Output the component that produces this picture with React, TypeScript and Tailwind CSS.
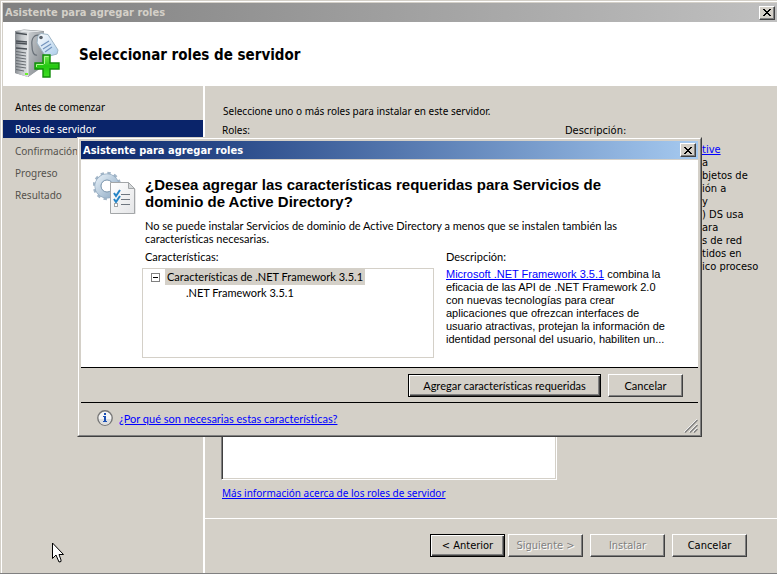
import { type ReactNode } from "react";

const UI = "font-['Noto_Sans',Tahoma,sans-serif]";
const UI_WIDE = "font-['DejaVu_Sans_Condensed','DejaVu_Sans',sans-serif] text-[11px]";
const UI_BOLD = "font-['DejaVu_Sans_Condensed','DejaVu_Sans',sans-serif] font-bold";

const steps = [
  { label: "Antes de comenzar", state: "done" },
  { label: "Roles de servidor", state: "current" },
  { label: "Confirmación", state: "pending" },
  { label: "Progreso", state: "pending" },
  { label: "Resultado", state: "pending" },
];

const stepStyles: Record<string, string> = {
  done: "text-black",
  current: "bg-[#0a246a] text-white",
  pending: "text-[#55524d]",
};

const roleLines = ["a", "bjetos de", "ión a", "y", ") DS usa", "ara", "s de red", "tidos en", "ico proceso"];

const descriptionLines = [
  "eficacia de las API de .NET Framework 2.0",
  "con nuevas tecnologías para crear",
  "aplicaciones que ofrezcan interfaces de",
  "usuario atractivas, protejan la información de",
  "identidad personal del usuario, habiliten un...",
];

function CloseButton() {
  return (
    <button
      type="button"
      aria-label="Cerrar"
      className="flex h-[14px] w-4 shrink-0 items-center justify-center border border-t-white border-r-[#404040] border-b-[#404040] border-l-white bg-[#d4d0c8] shadow-[inset_-1px_-1px_0_#808080]"
    >
      <svg width="8" height="7" viewBox="0 0 8 7" shapeRendering="crispEdges">
        <path
          d="M0 0h2v1h1v1h2v-1h1v-1h2v1h-1v1h-1v1h-1v1h1v1h1v1h1v1h-2v-1h-1v-1h-2v1h-1v1h-2v-1h1v-1h1v-1h1v-1h-1v-1h-1v-1h-1z"
          fill="#000"
        />
      </svg>
    </button>
  );
}

function PushButton({
  children,
  primary = false,
  disabled = false,
  className = "w-[75px]",
}: {
  children: ReactNode;
  primary?: boolean;
  disabled?: boolean;
  className?: string;
}) {
  const frame = primary
    ? "border-black shadow-[inset_1px_1px_0_#fff,inset_-1px_-1px_0_#404040,inset_-2px_-2px_0_#808080]"
    : "border-t-white border-l-white border-r-[#404040] border-b-[#404040] shadow-[inset_-1px_-1px_0_#808080]";
  const ink = disabled ? "text-[#808080] [text-shadow:1px_1px_0_#fff]" : "text-black";
  return (
    <button
      type="button"
      disabled={disabled}
      className={`flex h-[23px] shrink-0 items-center justify-center border bg-[#d4d0c8] whitespace-nowrap ${frame} ${ink} ${className}`}
    >
      {children}
    </button>
  );
}

function ServerIcon() {
  return (
    <svg width="46" height="50" viewBox="0 0 46 50" className="shrink-0" aria-hidden="true">
      <defs>
        <linearGradient id="front" x1="0" x2="1">
          <stop offset="0" stopColor="#868b90" />
          <stop offset="0.5" stopColor="#c3c7ca" />
          <stop offset="1" stopColor="#dfe2e4" />
        </linearGradient>
        <linearGradient id="side" x1="0" x2="1" y2="1">
          <stop offset="0" stopColor="#c9cdd0" />
          <stop offset="1" stopColor="#7c8287" />
        </linearGradient>
        <linearGradient id="plus" x1="0" y1="0" x2="0" y2="1">
          <stop offset="0" stopColor="#7be854" />
          <stop offset="0.5" stopColor="#24c911" />
          <stop offset="1" stopColor="#3fdf22" />
        </linearGradient>
        <linearGradient id="tag" x1="0" x2="1" y2="1">
          <stop offset="0" stopColor="#ffffff" />
          <stop offset="1" stopColor="#a9cbea" />
        </linearGradient>
      </defs>
      <path d="M0 2L9 0.500L29 2V36L13 48L0 44z" fill="#8b9094" />
      <path d="M1 2L9 1L28 2.500L13 4z" fill="#e3e6e8" />
      <path d="M13 4L29 2.500V37L13 48z" fill="url(#side)" />
      <path d="M0 2L13 4V48L0 44z" fill="url(#front)" />
      <path d="M1 4L12 5.500M1 12L12 13M1 14L12 15M1 19L12 20" stroke="#4a5056" strokeWidth="1.500" />
      <g stroke="#666b70" strokeWidth="1">
        <path d="M1 22.500L11 24M1 25.500L11 27M1 28.500L11 30M1 31.500L11 33M1 34.500L11 36M1 37.500L11 39M1 40.500L9 42" />
      </g>
      <path d="M13 4V47" stroke="#eef0f1" />
      <rect x="10" y="44" width="3" height="2" fill="#6bf12b" />
      <path d="M26 7C19 4 16 10 17 17C17 23 19 27 22 26" fill="none" stroke="#687078" strokeWidth="1.200" />
      <path d="M23 7L26 4.500L33 5.500L43 21L42 25L31 28L22 14z" fill="url(#tag)" stroke="#9fb6c6" />
      <circle cx="26" cy="8.500" r="1.800" fill="#59616a" />
      <path d="M26 17L34 12M28 20L36 15M30 23L37 18" stroke="#7494bd" strokeWidth="1.200" />
      <path d="M28 26h7v8h9v6h-9v8h-7v-8h-8v-6h8z" fill="url(#plus)" stroke="#128d0b" strokeWidth="1.400" />
      <path d="M29.500 35V27.500h4M21.500 38V35.500h7" fill="none" stroke="#b2f695" />
    </svg>
  );
}

function GearListIcon() {
  return (
    <svg width="44" height="44" viewBox="0 0 44 44" className="shrink-0" aria-hidden="true">
      <defs>
        <linearGradient id="gear" x1="0" x2="1" y2="1">
          <stop offset="0" stopColor="#dfeaf3" />
          <stop offset="1" stopColor="#94afc8" />
        </linearGradient>
        <linearGradient id="sheet" x1="0" x2="1" y2="1">
          <stop offset="0" stopColor="#ffffff" />
          <stop offset="1" stopColor="#e4e5e7" />
        </linearGradient>
      </defs>
      <circle cx="14" cy="15" r="12.500" fill="none" stroke="#a3b6c8" strokeWidth="3.500" strokeDasharray="3.270 3.270" />
      <circle cx="14" cy="15" r="9" fill="none" stroke="#93abc1" strokeWidth="7" />
      <circle cx="14" cy="15" r="9" fill="none" stroke="url(#gear)" strokeWidth="5.500" />
      <circle cx="14" cy="15" r="6" fill="#fff" stroke="#7e98af" />
      <path d="M18.500 12.500h18l6 6V43h-24z" fill="#9b9ea1" opacity="0.500" />
      <path d="M17.500 11.500h18l6 6V42.500h-24z" fill="url(#sheet)" stroke="#a3a6a8" />
      <path d="M35.500 11.500v6h6z" fill="#d5d8da" stroke="#a3a6a8" />
      <path d="M28 23.500h9M28 28.500h9M28 33.500h9" stroke="#6f7780" />
      <path d="M21 22l2 3l4-6M21 28l2 3l4-6" fill="none" stroke="#2384c6" strokeWidth="2" />
      <rect x="21.500" y="32.500" width="3" height="3" fill="#fff" stroke="#a1a5a8" />
    </svg>
  );
}

function InfoIcon() {
  return (
    <svg width="16" height="16" viewBox="0 0 16 16" className="shrink-0" aria-hidden="true">
      <circle cx="8" cy="8" r="7.200" fill="#f6f6f6" stroke="#777" strokeWidth="1.400" />
      <path d="M2 9a6 6 0 0 0 12 0z" fill="#dedfe0" />
      <path d="M7 3h2v2h-2zM6 6h3v5h1v1H6v-1h1V7H6z" fill="#1a4fb5" />
    </svg>
  );
}

function TitleBar({ className }: { className: string }) {
  return (
    <div className={`flex items-center justify-between bg-linear-to-r px-[2px] text-[11px] ${UI_BOLD} ${className}`}>
      <span>Asistente para agregar roles</span>
      <CloseButton />
    </div>
  );
}

function RequiredFeaturesDialog() {
  return (
    <section
      role="dialog"
      aria-label="Asistente para agregar roles"
      className="absolute top-[137px] left-[77px] w-[625px] border border-t-[#d4d0c8] border-r-[#404040] border-b-[#404040] border-l-[#d4d0c8] bg-[#d4d0c8] font-[Lato,Arial,sans-serif] text-[11px] leading-[13px] [font-variant-ligatures:none]"
    >
      <div className="border border-t-white border-r-[#808080] border-b-[#808080] border-l-white p-[2px]">
        <TitleBar className="h-[18px] from-[#0a246a] to-[#a6caf0] text-white" />
        <div className="mt-px flex h-[208px] gap-2 border-b border-black bg-white pt-[11px] pr-4 pl-3">
          <GearListIcon />
          <div className="min-w-0 grow pt-[5px]">
            <h2 className="font-['Liberation_Sans',Arial,sans-serif] text-[15px] leading-[17px] font-bold">
              ¿Desea agregar las características requeridas para Servicios de
              <br />
              dominio de Active Directory?
            </h2>
            <p className="mt-[9px]">
              No se puede instalar Servicios de dominio de Active Directory a menos que se instalen también las
              <br />
              características necesarias.
            </p>
            <div className="mt-[5px] flex gap-3">
              <div className="w-[289px] shrink-0">
                <h3>Características:</h3>
                <ul className="mt-[5px] -ml-[3px] h-[90px] border border-[#d4d0c8] leading-4">
                  <li>
                    <div className="flex items-center pl-2">
                      <button
                        type="button"
                        aria-label="Contraer"
                        className="mr-[5px] flex size-[9px] items-center justify-center border border-[#808080]"
                      >
                        <span className="h-px w-[5px] bg-black" />
                      </button>
                      <span className="bg-[#d4d0c8] px-[2px]">Características de .NET Framework 3.5.1</span>
                    </div>
                    <ul>
                      <li className="pl-[43px]">.NET Framework 3.5.1</li>
                    </ul>
                  </li>
                </ul>
              </div>
              <div className="min-w-0">
                <h3>Descripción:</h3>
                <p className="mt-[5px] font-['Liberation_Sans',Arial,sans-serif] whitespace-nowrap">
                  <a href="#net" className="text-[#0000ff] underline">
                    Microsoft .NET Framework 3.5.1
                  </a>{" "}
                  combina la
                  {descriptionLines.map((line) => (
                    <span key={line} className="block">
                      {line}
                    </span>
                  ))}
                </p>
              </div>
            </div>
          </div>
        </div>
        <div className="flex h-[35px] items-start justify-end gap-[7px] border-b border-black pt-[6px] pr-[15px]">
          <PushButton primary className="w-[193px]">
            Agregar características requeridas
          </PushButton>
          <PushButton>Cancelar</PushButton>
        </div>
        <div className="flex h-[30px] items-center justify-between pl-4">
          <div className="flex items-center gap-[6px]">
            <InfoIcon />
            <a href="#why" className="text-[#0000ff] underline">
              ¿Por qué son necesarias estas características?
            </a>
          </div>
          <svg width="14" height="14" viewBox="0 0 14 14" className="self-end" aria-hidden="true">
            <path d="M0 13L13 0M5 13L13 5M9 13L13 9" stroke="#fff" />
            <path d="M1 13.500L13.500 1M6 13.500L13.500 6M10 13.500L13.500 10" stroke="#808080" strokeWidth="1.500" />
          </svg>
        </div>
      </div>
    </section>
  );
}

export default function App() {
  return (
    <div className={`relative flex min-h-screen flex-col overflow-hidden border-b border-[#808080] bg-[#d4d0c8] pt-px pl-px text-[10px] leading-[13px] text-black ${UI}`}>
      <div className="flex grow flex-col border-t border-l border-white pt-px pl-px">
        <TitleBar className="h-[19px] from-[#808080] to-[#c0c0c0] text-[#d4d0c8]" />
        <header className="flex h-16 items-center gap-[18px] bg-white pl-3">
          <ServerIcon />
          <h1 className={`pt-[2px] text-[15px] leading-[18px] ${UI_BOLD}`}>Seleccionar roles de servidor</h1>
        </header>
        <div className="flex grow">
          <nav className="w-[202px] shrink-0 border-r-2 border-white pt-3">
            <ul className="flex flex-col gap-1">
              {steps.map((step) => (
                <li key={step.label} className={`h-[18px] pl-3 leading-[18px] ${stepStyles[step.state]}`}>
                  {step.label}
                </li>
              ))}
            </ul>
          </nav>
          <main className="flex min-w-0 grow flex-col">
            <div className="flex grow flex-col px-4 pt-[19px]">
              <p className="pl-[2px]">Seleccione uno o más roles para instalar en este servidor.</p>
              <div className="mt-[6px] flex grow gap-2">
                <div className="flex w-[336px] shrink-0 flex-col">
                  <h2 className="pl-px">Roles:</h2>
                  <div className="mt-1 grow border border-t-[#808080] border-r-white border-b-white border-l-[#808080] bg-white shadow-[inset_1px_1px_0_#404040,inset_-1px_-1px_0_#d4d0c8]" />
                </div>
                <div className={`min-w-0 whitespace-nowrap ${UI_WIDE}`}>
                  <h2>Descripción:</h2>
                  <div className="mt-[6px] pl-[137px]">
                    <a href="#adds" className="text-[#0000ff] underline">
                      tive
                    </a>
                    {roleLines.map((line) => (
                      <span key={line} className="block">
                        {line}
                      </span>
                    ))}
                  </div>
                </div>
              </div>
              <div className="flex h-[38px] items-start pt-[7px] pl-px">
                <a href="#more" className="text-[#0000ff] underline">
                  Más información acerca de los roles de servidor
                </a>
              </div>
            </div>
            <footer className={`flex h-[55px] items-start justify-end gap-[7px] border-t border-white pt-[15px] pr-[30px] ${UI_WIDE}`}>
              <div className="flex gap-[3px]">
                <PushButton primary>&lt; Anterior</PushButton>
                <PushButton disabled>Siguiente &gt;</PushButton>
              </div>
              <PushButton disabled>Instalar</PushButton>
              <PushButton>Cancelar</PushButton>
            </footer>
          </main>
        </div>
      </div>
      <RequiredFeaturesDialog />
      <svg width="13" height="22" viewBox="0 0 13 22" className="absolute top-[542px] left-[52px]" aria-hidden="true">
        <path d="M0.500 1V16.500L4 13L7 20L9 19.500V18L7 12.500H11.500z" fill="#fff" stroke="#000" />
      </svg>
    </div>
  );
}
